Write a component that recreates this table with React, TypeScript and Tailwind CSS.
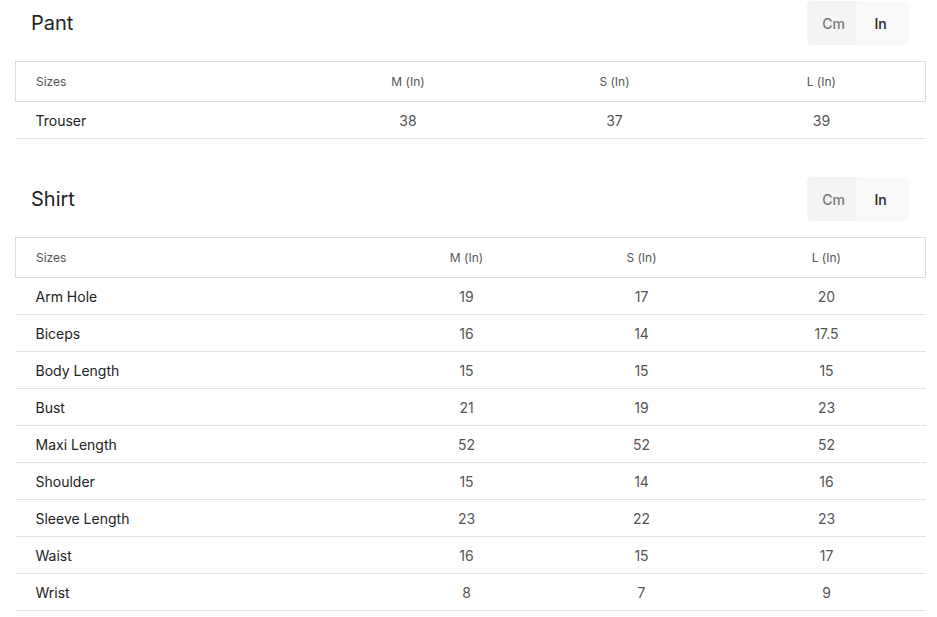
const font = { fontFamily: "Inter, 'Noto Sans', sans-serif" };

type Section = {
  title: string;
  widths: string[];
  rows: { name: string; m: string; s: string; l: string }[];
};

const sections: Section[] = [
  {
    title: "Pant",
    widths: ["w-[289px]", "w-[207px]", "w-[206px]", "w-[208px]"],
    rows: [{ name: "Trouser", m: "38", s: "37", l: "39" }],
  },
  {
    title: "Shirt",
    widths: ["w-[362px]", "w-[178px]", "w-[172px]", "w-[198px]"],
    rows: [
      { name: "Arm Hole", m: "19", s: "17", l: "20" },
      { name: "Biceps", m: "16", s: "14", l: "17.5" },
      { name: "Body Length", m: "15", s: "15", l: "15" },
      { name: "Bust", m: "21", s: "19", l: "23" },
      { name: "Maxi Length", m: "52", s: "52", l: "52" },
      { name: "Shoulder", m: "15", s: "14", l: "16" },
      { name: "Sleeve Length", m: "23", s: "22", l: "23" },
      { name: "Waist", m: "16", s: "15", l: "17" },
      { name: "Wrist", m: "8", s: "7", l: "9" },
    ],
  },
];

function SizeTable({ section }: { section: Section }) {
  const [w0, w1, w2, w3] = section.widths;
  return (
    <div className="w-[910px]">
      <div className="flex items-center justify-between pl-4 pr-4">
        <h2 className="text-[20px] text-[#222] leading-none">{section.title}</h2>
        <div className="flex h-[44px] rounded-[5px] bg-[#f4f4f4] text-[14px] overflow-hidden">
          <button className="w-[49px] pl-1 text-[#777] font-medium">Cm</button>
          <button className="w-[53px] pr-1 bg-[#f9f9f9] text-[#222] font-medium rounded-[5px]">In</button>
        </div>
      </div>

      <table className="mt-4 w-[910px] border-collapse table-fixed">
        <thead>
          <tr className="h-[40px] border border-[#dcdcdc] text-[12px] text-[#555]">
            <th className={`${w0} pl-5 text-left font-normal`}>Sizes</th>
            <th className={`${w1} font-normal`}>M (In)</th>
            <th className={`${w2} font-normal`}>S (In)</th>
            <th className={`${w3} font-normal`}>L (In)</th>
          </tr>
        </thead>
        <tbody>
          {section.rows.map((r) => (
            <tr key={r.name} className="h-[37px] border-b border-[#e3e3e3] text-[14px]">
              <td className="pl-5 text-[#222]">{r.name}</td>
              <td className="text-center text-[#555]">{r.m}</td>
              <td className="text-center text-[#555]">{r.s}</td>
              <td className="text-center text-[#555]">{r.l}</td>
            </tr>
          ))}
        </tbody>
      </table>
    </div>
  );
}

export default function App() {
  return (
    <div className="w-[937px] h-[617px] bg-white pl-[15px] pt-[1px]" style={font}>
      <div className="flex flex-col gap-[38px]">
        {sections.map((s) => (
          <SizeTable key={s.title} section={s} />
        ))}
      </div>
    </div>
  );
}
